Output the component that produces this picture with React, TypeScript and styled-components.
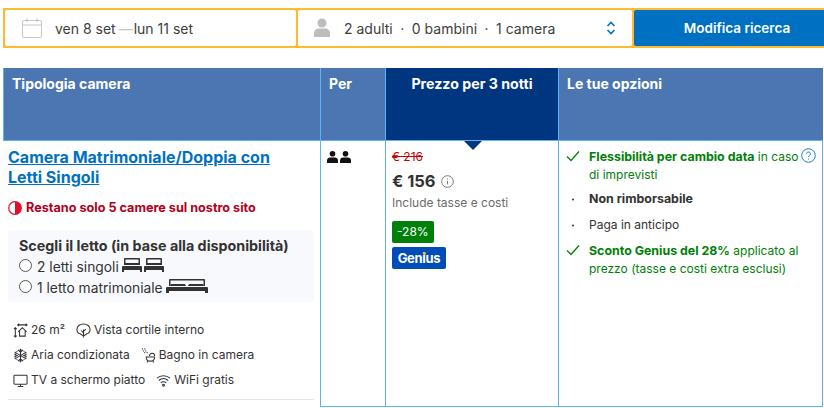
import React, { FC } from "react";
import styled, { createGlobalStyle } from "styled-components";

const GlobalStyle = createGlobalStyle`
  html, body { margin: 0; padding: 0; background: #fff; overflow: hidden; }
  body { font-family: Inter, "Liberation Sans", sans-serif; color: #333; }
`;

const Page = styled.div`
  width: 824px;
  height: 408px;
  overflow: hidden;
  padding: 8px 0 0 3px;
  box-sizing: border-box;
`;

const SearchBar = styled.div`
  display: grid;
  grid-template-columns: 294px 336px 207px;
  width: 837px;
  height: 40px;
  box-sizing: border-box;
  background: #febb30;
  padding: 2px 0;
`;

const Field = styled.div`
  background: #fff;
  display: flex;
  align-items: center;
  font-size: 14px;
  color: #3d3d3d;
  margin-left: ${p => (p.$first ? "2px" : "1px")};
  margin-right: 1px;
  border-radius: 2px;
`;

const DateIcon = styled.svg`
  width: 22px;
  height: 22px;
  margin-left: 16px;
  margin-right: 12px;
`;

const DateDash = styled.span`
  color: #c4c4c4;
  margin: 0 1px 0 3px;
`;

const GuestIcon = styled.svg`
  width: 18px;
  height: 20px;
  margin-left: 15px;
  margin-right: 13px;
`;

const GuestDot = styled.span`
  margin: 0 7.5px;
`;

const Chevrons = styled.svg`
  width: 10px;
  height: 14px;
  margin-left: auto;
  margin-right: 16px;
`;

const SearchButton = styled.button`
  border: 0;
  background: #0071c2;
  color: #fff;
  font: 600 13.5px Inter, "Liberation Sans", sans-serif;
  margin-left: 1px;
  padding: 0;
  border-radius: 2px 0 0 2px;
`;

const Table = styled.div`
  margin-top: 20px;
  width: 820px;
  display: grid;
  grid-template-columns: 317px 65px 173px 265px;
  grid-template-rows: 73px 266px;
`;

const HeadCell = styled.div`
  background: ${p => (p.$active ? "#003580" : "#4c76b2")};
  color: #fff;
  font-size: ${p => (p.$active ? "14.2px" : "14px")};
  font-weight: 700;
  line-height: 18px;
  padding: 7px 8px 0 8px;
  text-align: ${p => (p.$active ? "center" : "left")};
  border-left: 1px solid #5bb4f5;
  border-bottom: 1px solid #5bb4f5;
  position: relative;
  &:last-child { border-right: 1px solid #5bb4f5; }
`;

const HeadNotch = styled.span`
  position: absolute;
  left: 78px;
  bottom: -10px;
  width: 0;
  height: 0;
  border-left: 9px solid transparent;
  border-right: 9px solid transparent;
  border-top: 9px solid #003580;
`;

const Cell = styled.div`
  box-sizing: border-box;
  border-left: ${p => (p.$noLeft ? "0" : "1px solid #5bb4f5")};
  border-bottom: ${p => (p.$noLeft ? "0" : "1px solid #5bb4f5")};
  &:last-child { border-right: 1px solid #5bb4f5; }
`;

const RoomCell = styled(Cell)`
  padding: 6px 6px 0 5px;
  display: flex;
  flex-direction: column;
`;

const RoomTitle = styled.a`
  color: #0071c2;
  font-size: 16px;
  font-weight: 700;
  line-height: 20px;
  text-decoration: underline;
  max-width: 270px;
`;

const Scarcity = styled.div`
  display: flex;
  align-items: center;
  gap: 4px;
  margin-top: 13px;
  color: #b3001b;
  font-size: 12.65px;
  font-weight: 700;
  line-height: 16px;
`;

const BedPanel = styled.div`
  margin-top: 14px;
  background: #f8f9fd;
  border-radius: 3px;
  padding: 6px 10px 4px 10px;
  line-height: 20px;
`;

const BedTitle = styled.div`
  font-weight: 700;
  font-size: 14.3px;
  padding-left: 1px;
`;

const BedOption = styled.label`
  display: flex;
  align-items: center;
  height: 21px;
  font-size: 13.8px;
  padding-left: 1px;
`;

const Radio = styled.span`
  width: 11px;
  height: 11px;
  border: 1px solid #555;
  border-radius: 50%;
  margin-right: 5px;
  margin-top: -3px;
  background: #fff;
`;

const BedIcon = styled.svg`
  height: 14px;
  margin-left: 3px;
  margin-top: -3px;
  color: #333;
`;

const Facilities = styled.div`
  margin-top: 20px;
  padding: 0 0 11px 5px;
  border-bottom: 1px solid #e6e6e6;
  display: flex;
  flex-direction: column;
  gap: 9px;
`;

const FacilityRow = styled.div`
  display: flex;
  gap: 11px;
`;

const Facility = styled.span`
  display: inline-flex;
  align-items: center;
  gap: 3px;
  font-size: 12px;
  line-height: 16px;
  color: #333;
`;

const FacilityIcon = styled.svg`
  width: 15px;
  height: 15px;
  fill: none;
  stroke: #333;
  stroke-width: 1.1;
`;

const PeopleCell = styled(Cell)`
  padding: 7px 0 0 6px;
`;

const PriceCell = styled(Cell)`
  padding: 9px 6px 0 6px;
`;

const OldPrice = styled.div`
  color: #cc0000;
  font-size: 12px;
  line-height: 14px;
  text-decoration: line-through;
`;

const PriceRow = styled.div`
  display: flex;
  align-items: center;
  gap: 5px;
  margin-top: 7px;
  font-size: 16.5px;
  font-weight: 700;
  line-height: 20px;
`;

const TaxNote = styled.div`
  margin-top: 4px;
  font-size: 12px;
  line-height: 16px;
  color: #6b6b6b;
`;

const DiscountBadge = styled.div`
  display: inline-block;
  margin-top: 10px;
  background: #008009;
  color: #fff;
  font-size: 12px;
  line-height: 22px;
  height: 22px;
  padding: 0 5px;
  border-radius: 2px;
`;

const GeniusBadge = styled.div`
  width: 54px;
  box-sizing: border-box;
  margin-top: 4px;
  background: #004cb8;
  color: #fff;
  font-size: 13px;
  font-weight: 700;
  line-height: 22px;
  height: 22px;
  text-align: center;
  border-radius: 2px;
  letter-spacing: -0.3px;
  position: relative;
`;

const GeniusDot = styled.span`
  position: absolute;
  left: 31px;
  top: 5px;
  width: 3px;
  height: 3px;
  border-radius: 50%;
  background: #febb02;
`;

const OptionsCell = styled(Cell)`
  padding: 7px 8px 0 7px;
`;

const OptionRow = styled.div`
  display: grid;
  grid-template-columns: 23px 1fr;
  font-size: 12px;
  line-height: 18px;
  margin-bottom: 8px;
  color: ${p => (p.$green ? "#008009" : "#333")};
  position: relative;
  &:first-child { margin-bottom: 6px; }
`;

const Strong = styled.strong`
  font-size: 12.4px;
  font-weight: 700;
`;

const OptionMark = styled.span`
  display: flex;
  justify-content: center;
  width: 14px;
  padding-top: 1px;
`;

const Help = styled.svg`
  position: absolute;
  right: -2px;
  top: 0;
  width: 15px;
  height: 15px;
`;

const Check = () => (
  <svg width="14" height="14" viewBox="0 0 14 14" fill="none" stroke="#008009" strokeWidth="1.3">
    <path d="M1 7.5 L5 11.5 L13 2.5" />
  </svg>
);

const Bullet = () => (
  <svg width="14" height="14" viewBox="0 0 14 14"><circle cx="7" cy="8.5" r="1" fill="#333" /></svg>
);

const SingleBed = () => (
  <>
    <path d="M3 0h14a1 1 0 0 1 1 1v6h-1.500V1.500h-13V7H2V1a1 1 0 0 1 1-1z" />
    <path d="M3 5h14v2H3z" />
    <path d="M1 8h18a1 1 0 0 1 1 1v3H0V9a1 1 0 0 1 1-1z" />
    <rect x="0" y="12" width="2" height="2" />
    <rect x="18" y="12" width="2" height="2" />
  </>
);

const TwinBeds = () => (
  <BedIcon viewBox="0 0 42 14" width="42" fill="currentColor">
    <SingleBed />
    <g transform="translate(22 0)"><SingleBed /></g>
  </BedIcon>
);

const DoubleBed = () => (
  <BedIcon viewBox="0 0 42 14" width="42" fill="currentColor">
    <path d="M4 0h34a1 1 0 0 1 1 1v6h-1.500V1.500h-33V7H3V1a1 1 0 0 1 1-1z" />
    <path d="M5 5h14l1 2H4zM23 5h14l1 2H22z" />
    <path d="M1 8h40a1 1 0 0 1 1 1v3H0V9a1 1 0 0 1 1-1z" />
    <rect x="0" y="12" width="3" height="2" />
    <rect x="39" y="12" width="3" height="2" />
  </BedIcon>
);

const Person = ({ x }: { x: number }) => (
  <g transform={`translate(${x} 0)`}>
    <circle cx="5.500" cy="2.800" r="2.800" />
    <path d="M0 12V9.500C0 7.500 1.500 6.500 3 6.500h5c1.500 0 3 1 3 3V12z" />
  </g>
);

const App: FC = () => (
  <Page>
    <GlobalStyle />
    <SearchBar>
      <Field $first>
        <DateIcon viewBox="0 0 22 22" fill="none" stroke="#c6c6c6" strokeWidth="1">
          <rect x="1.500" y="3.500" width="19" height="17" rx="1.500" />
          <path d="M1.500 8h19M6 1v4M16 1v4" />
        </DateIcon>
        ven 8 set<DateDash>—</DateDash>lun 11 set
      </Field>
      <Field>
        <GuestIcon viewBox="0 0 18 20" fill="#bdbdbd">
          <circle cx="9" cy="5" r="4.500" />
          <path d="M1 19v-4c0-3 2.500-4.500 5-4.500h6c2.500 0 5 1.500 5 4.500v4z" />
        </GuestIcon>
        2 adulti<GuestDot>·</GuestDot>0 bambini<GuestDot>·</GuestDot>1 camera
        <Chevrons viewBox="0 0 10 14" fill="none" stroke="#0071c2" strokeWidth="1.600">
          <path d="M1.500 5 5 1.500 8.500 5M1.500 9 5 12.500 8.500 9" />
        </Chevrons>
      </Field>
      <SearchButton>Modifica ricerca</SearchButton>
    </SearchBar>
    <Table>
      <HeadCell>Tipologia camera</HeadCell>
      <HeadCell>Per</HeadCell>
      <HeadCell $active>Prezzo per 3 notti<HeadNotch /></HeadCell>
      <HeadCell>Le tue opzioni</HeadCell>

      <RoomCell $noLeft>
        <RoomTitle>Camera Matrimoniale/Doppia con Letti Singoli</RoomTitle>
        <Scarcity>
          <svg width="14" height="14" viewBox="0 0 14 14">
            <circle cx="7" cy="7" r="6.300" fill="#fff" stroke="#e0102c" strokeWidth="1.200" />
            <path d="M7 .7a6.300 6.300 0 0 1 0 12.600z" fill="#e0102c" />
          </svg>
          Restano solo 5 camere sul nostro sito
        </Scarcity>
        <BedPanel>
          <BedTitle>Scegli il letto (in base alla disponibilità)</BedTitle>
          <BedOption><Radio />2 letti singoli<TwinBeds /></BedOption>
          <BedOption><Radio />1 letto matrimoniale<DoubleBed /></BedOption>
        </BedPanel>
        <Facilities>
          <FacilityRow>
            <Facility>
              <FacilityIcon viewBox="0 0 16 16">
                <path d="M2.500 5v10M1 6.500 2.500 5 4 6.500M1 13.500 2.500 15 4 13.500M5 2h10M6.500 .8 5 2l1.500 1.200M13.500 .8 15 2l-1.500 1.200M5.500 9.500 10 5l4.500 4.500M7 8.500V14h6V8.500" />
              </FacilityIcon>
              26 m²
            </Facility>
            <Facility>
              <FacilityIcon viewBox="0 0 16 16">
                <path d="M8 15.500V7M8 10.500 5.500 8M8 9l2.500-2.500M4.500 11.500C2.500 11 1 9 1 6.800 1 3.500 4 1 8 1s7 2.500 7 5.800c0 2.200-1.500 4.200-3.500 4.700l-3.500 2.500z" />
              </FacilityIcon>
              Vista cortile interno
            </Facility>
          </FacilityRow>
          <FacilityRow>
            <Facility>
              <FacilityIcon viewBox="0 0 16 16" strokeWidth="1.300">
                <path d="M8 .8v14.400M1.800 4.400l12.400 7.200M1.800 11.600l12.400-7.200M5.500 2 8 4.500 10.500 2M5.500 14 8 11.500l2.500 2.500M1.500 6.500 4.500 8l-3 1.500M14.500 6.500 11.500 8l3 1.500" />
                <path d="M8 1.500 13.600 4.700v6.600L8 14.500l-5.600-3.200V4.700z" strokeWidth="0.700" />
              </FacilityIcon>
              Aria condizionata
            </Facility>
            <Facility>
              <FacilityIcon viewBox="0 0 16 16">
                <path d="M5.500 9.500h9c0 3-1.800 4.500-4.500 4.500S5.500 12.500 5.500 9.500zM7 14l-.5 1.500M13 14l.5 1.500M9 8.500c.3-1.800 1.300-2.800 3-2.800s2.500 1 2.500 2.800" />
                <path d="M1 1h1M3.500 1h1M2 3h1M4.500 3h1M3.500 5h1M6 5h1" strokeWidth="1.300" />
              </FacilityIcon>
              Bagno in camera
            </Facility>
          </FacilityRow>
          <FacilityRow>
            <Facility>
              <FacilityIcon viewBox="0 0 16 16">
                <rect x="1" y="2.500" width="14" height="9.500" rx="1" />
                <path d="M8 12v2M5 14.500h6" />
              </FacilityIcon>
              TV a schermo piatto
            </Facility>
            <Facility>
              <FacilityIcon viewBox="0 0 16 16">
                <path d="M1 5.500c4-3.500 10-3.500 14 0M3 8c3-2.500 7-2.500 10 0M5 10.500c1.800-1.500 4.200-1.500 6 0" />
                <circle cx="8" cy="13" r="1" />
              </FacilityIcon>
              WiFi gratis
            </Facility>
          </FacilityRow>
        </Facilities>
      </RoomCell>

      <PeopleCell>
        <svg width="25" height="13" viewBox="0 0 25 13" fill="#111">
          <Person x={0} />
          <Person x={13} />
        </svg>
      </PeopleCell>

      <PriceCell>
        <OldPrice>€ 216</OldPrice>
        <PriceRow>
          € 156
          <svg width="13" height="13" viewBox="0 0 13 13" fill="none" stroke="#6b6b6b" strokeWidth="0.900">
            <circle cx="6.500" cy="6.500" r="5.800" />
            <path d="M6.500 5.800v3.500M6.500 3.500v1" />
          </svg>
        </PriceRow>
        <TaxNote>Include tasse e costi</TaxNote>
        <DiscountBadge>-28%</DiscountBadge>
        <GeniusBadge>Genius<GeniusDot /></GeniusBadge>
      </PriceCell>

      <OptionsCell>
        <OptionRow $green>
          <OptionMark><Check /></OptionMark>
          <span><Strong>Flessibilità per cambio data</Strong> in caso<br />di imprevisti</span>
          <Help viewBox="0 0 15 15" fill="none" stroke="#0071c2" strokeWidth="0.900">
            <circle cx="7.500" cy="7.500" r="6.800" />
            <path d="M5.500 6c0-1.200.9-2 2-2s2 .8 2 1.900c0 1.600-2 1.600-2 3.100M7.500 10.500v1" />
          </Help>
        </OptionRow>
        <OptionRow>
          <OptionMark><Bullet /></OptionMark>
          <Strong>Non rimborsabile</Strong>
        </OptionRow>
        <OptionRow>
          <OptionMark><Bullet /></OptionMark>
          Paga in anticipo
        </OptionRow>
        <OptionRow $green>
          <OptionMark><Check /></OptionMark>
          <span><Strong>Sconto Genius del 28%</Strong> applicato al<br />prezzo (tasse e costi extra esclusi)</span>
        </OptionRow>
      </OptionsCell>
    </Table>
  </Page>
);

export default App;
